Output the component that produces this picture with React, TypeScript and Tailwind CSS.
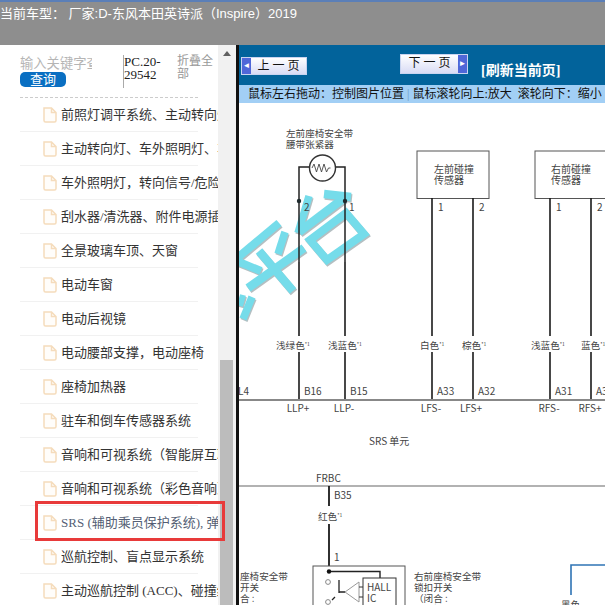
const CN = '"Liberation Serif","Noto Sans CJK SC",serif';
const SANS = '"Liberation Sans","Noto Sans CJK SC",sans-serif';

const items = [
  "前照灯调平系统、主动转向灯系统",
  "主动转向灯、车外照明灯、车内照明灯",
  "车外照明灯，转向信号/危险警告灯",
  "刮水器/清洗器、附件电源插座系统",
  "全景玻璃车顶、天窗",
  "电动车窗",
  "电动后视镜",
  "电动腰部支撑，电动座椅",
  "座椅加热器",
  "驻车和倒车传感器系统",
  "音响和可视系统（智能屏互联）",
  "音响和可视系统（彩色音响）",
  "SRS (辅助乘员保护系统), 弹出式发动机罩",
  "巡航控制、盲点显示系统",
  "主动巡航控制 (ACC)、碰撞缓解系统",
];

function DocIcon() {
  return (
    <svg width="14" height="16" viewBox="0 0 14 16" className="shrink-0">
      <path d="M1 1 H8.5 L13 5.5 V13.5 a1.5 1.5 0 0 1 -1.5 1.5 H2.5 a1.5 1.5 0 0 1 -1.5 -1.5 Z M8.5 1 V5.5 H13" fill="#fffdfa" stroke="#f5dcbc" strokeWidth="1.5" />
    </svg>
  );
}

function Wire({ x, y1, y2, w = 1.6 }: { x: number; y1: number; y2: number; w?: number }) {
  return <line x1={x} x2={x} y1={y1} y2={y2} stroke="#1a1a1a" strokeWidth={w} />;
}

function Label({ x, y, t, size = 9.5, anchor = "start" }: { x: number; y: number; t: string; size?: number; anchor?: "start" | "middle" }) {
  return <text x={x} y={y} fontSize={size} fill="#444" textAnchor={anchor} fontFamily='"Noto Sans CJK SC","Liberation Sans",sans-serif'>{t}</text>;
}

const ox = 239, oy = 103;
const X = (v: number) => v - ox;
const Y = (v: number) => v - oy;

function WatermarkShapes() {
  const strokes: [number, number, number, number, number][] = [
    // 平
    [236, 259, 279, 223, 8],
    [248, 288, 304, 248, 8.5],
    [259, 251, 293, 291, 8.5],
    [239, 262, 261, 271, 8],
    [285, 232, 278, 254, 7.5],
    // 台
    [309, 196, 298, 233, 7.5],
    [299, 232, 344, 198, 8.5],
    [324, 194, 351, 197, 8.5],
    // lower-left remainder
    [252, 297, 243, 319, 7.5],
    [243, 295, 240, 306, 6],
  ];
  return (
    <>
      {strokes.map(([a, b, c, d, w], i) => (
        <line key={i} x1={X(a)} y1={Y(b)} x2={X(c)} y2={Y(d)} strokeWidth={w} />
      ))}
      <path d={`M${X(310)} ${Y(240)} L${X(346)} ${Y(213)} L${X(364)} ${Y(234)} L${X(327)} ${Y(260)} Z`} fill="none" strokeWidth={8} />
    </>
  );
}

function Diagram() {
  // [wire x, colour, colour text x, pin, signal, signal centre x]
  const cols: [number, string, number, string, string, number][] = [
    [299, "浅绿色", 276, "B16", "LLP+", 298],
    [345, "浅蓝色", 328, "B15", "LLP-", 344],
    [432, "白色", 420, "A33", "LFS-", 431],
    [473, "棕色", 462, "A32", "LFS+", 471],
    [550, "浅蓝色", 531, "A31", "RFS-", 549],
    [591, "蓝色", 581, "A30", "RFS+", 590],
  ];
  return (
    <svg width="366" height="502" viewBox="0 0 366 502" className="block">
      {/* watermark */}
      <g stroke="#b4bfc2" transform="translate(1 1.5)">
        <WatermarkShapes />
      </g>
      <g stroke="#75dcea">
        <WatermarkShapes />
      </g>

      <Label x={X(286)} y={Y(137)} t="左前座椅安全带" size={9.6} />
      <Label x={X(286)} y={Y(148)} t="腰带张紧器" size={9.6} />

      {/* resistor */}
      <path d={`M${X(299)} ${Y(262)} V${Y(167)} H${X(345)} V${Y(262)}`} fill="none" stroke="#222" strokeWidth="1.5" />
      <circle cx={X(322.5)} cy={Y(168)} r="13" fill="#fff" stroke="#333" strokeWidth="1.4" />
      <path d={`M${X(312)} ${Y(168)} l2 -4 l2.5 8 l2.5 -8 l2.5 8 l2.5 -8 l2.5 8 l2 -4 h2`} fill="none" stroke="#444" strokeWidth="0.9" />
      <circle cx={X(299)} cy={Y(201)} r="2.2" fill="#1f2b2e" />
      <circle cx={X(345)} cy={Y(201)} r="2.2" fill="#1f2b2e" />
      <Label x={X(304)} y={Y(211)} t="2" size={10} />
      <Label x={X(349)} y={Y(211)} t="1" size={10} />

      {/* sensors */}
      <rect x={X(417)} y={Y(151)} width="72" height="47.5" fill="#fff" stroke="#555" strokeWidth="1" />
      <Label x={X(434)} y={Y(173)} t="左前碰撞" size={10} />
      <Label x={X(434)} y={Y(184)} t="传感器" size={10} />
      <rect x={X(535)} y={Y(151)} width="80" height="47.5" fill="#fff" stroke="#555" strokeWidth="1" />
      <Label x={X(551)} y={Y(173)} t="右前碰撞" size={10} />
      <Label x={X(551)} y={Y(184)} t="传感器" size={10} />
      <Label x={X(438)} y={Y(211)} t="1" size={10} />
      <Label x={X(479)} y={Y(211)} t="2" size={10} />
      <Label x={X(556)} y={Y(211)} t="1" size={10} />
      <Label x={X(597)} y={Y(211)} t="2" size={10} />

      {cols.map(([x, c, cx, pin, sig, sx]) => (
        <g key={pin}>
          {x > 400 && <Wire x={X(x)} y1={Y(198)} y2={Y(336)} />}
          {x < 400 && <Wire x={X(x)} y1={Y(262)} y2={Y(336)} />}
          <Wire x={X(x)} y1={Y(352)} y2={Y(400)} />
          <Label x={X(x + 5)} y={Y(395)} t={pin} size={10} />
          <Label x={X(sx)} y={Y(412)} t={sig} size={10} anchor="middle" />
          <text x={X(cx)} y={Y(349)} fontSize={9.6} fill="#444" fontFamily='"Noto Sans CJK SC",sans-serif'>{c}<tspan fontSize={5} dy={-3}>*1</tspan></text>
        </g>
      ))}
      <Label x={X(238)} y={Y(395)} t="L4" size={10} />
      <line x1="0" x2="366" y1={Y(400)} y2={Y(400)} stroke="#888" strokeWidth="1.8" />

      <Label x={X(369)} y={Y(445)} t="SRS 单元" size={10} />
      <Label x={X(316)} y={Y(482)} t="FRBC" size={10} />
      <line x1="0" x2="366" y1={Y(486)} y2={Y(486)} stroke="#666" strokeWidth="1.2" />
      <Wire x={X(329)} y1={Y(486)} y2={Y(506)} w={1.8} />
      <Wire x={X(329)} y1={Y(524)} y2={Y(571)} w={1.8} />
      <Label x={X(334)} y={Y(499)} t="B35" size={10} />
      <text x={X(318)} y={Y(520)} fontSize={9.6} fill="#444" fontFamily='"Noto Sans CJK SC",sans-serif'>红色<tspan fontSize={5} dy={-3}>*1</tspan></text>
      <Label x={X(334)} y={Y(561)} t="1" size={10} />

      {/* buckle switch */}
      <rect x={X(313)} y={Y(566)} width="92" height="50" fill="#fff" stroke="#555" strokeWidth="1" />
      <path d={`M${X(329)} ${Y(571.5)} H${X(380)} V${Y(578)}`} fill="none" stroke="#222" strokeWidth="1.4" />
      <circle cx={X(329)} cy={Y(571.5)} r="2.2" fill="#111" />
      <circle cx={X(328)} cy={Y(582)} r="2.4" fill="#fff" stroke="#888" />
      <circle cx={X(328)} cy={Y(602)} r="2.4" fill="#fff" stroke="#888" />
      <path d={`M${X(332)} ${Y(600)} L${X(335)} ${Y(597)} M${X(339)} ${Y(580)} V${Y(593)} M${X(339)} ${Y(592)} H${X(345)}`} fill="none" stroke="#222" strokeWidth="1.3" />
      <path d={`M${X(345)} ${Y(592)} L${X(359)} ${Y(582)} V${Y(602)} Z`} fill="none" stroke="#999" strokeWidth="1" />
      <path d={`M${X(359)} ${Y(587)} H${X(363)} M${X(359)} ${Y(597)} H${X(363)}`} fill="none" stroke="#333" strokeWidth="1" />
      <rect x={X(363)} y={Y(578)} width="33" height="28" fill="#fff" stroke="#333" strokeWidth="1" />
      <Label x={X(367)} y={Y(591)} t="HALL" size={10} />
      <Label x={X(367)} y={Y(602)} t="IC" size={10} />

      <Label x={X(240)} y={Y(580)} t="座椅安全带" size={9.6} />
      <Label x={X(240)} y={Y(591)} t="开关" size={9.6} />
      <Label x={X(240)} y={Y(602)} t="合 :" size={9.6} />
      <Label x={X(414)} y={Y(580)} t="右前座椅安全带" size={9.6} />
      <Label x={X(414)} y={Y(591)} t="锁扣开关" size={9.6} />
      <Label x={X(414)} y={Y(602)} t="（闭合 :" size={9.6} />
      <Label x={X(414)} y={Y(613)} t="未扣好 :" size={9.6} />

      <path d={`M${X(571)} ${Y(595)} V${Y(565)} H605`} fill="none" stroke="#2f74b5" strokeWidth="1.6" />
      <Label x={X(561)} y={Y(608)} t="黑色" size={9.6} />
    </svg>
  );
}

function NavBtn({ label, dir, className }: { label: string; dir: "l" | "r"; className: string }) {
  const arrow = (
    <span className="flex w-[9px] items-center justify-center self-stretch bg-[#4f67d8] text-[8px] leading-none text-white">{dir === "l" ? "◄" : "►"}</span>
  );
  return (
    <div className={`flex border border-[#c9d4f0] bg-gradient-to-b from-[#ffffff] to-[#d9dcf5] ${className}`}>
      {dir === "l" && arrow}
      <span className="flex-1 pl-[3px] text-center text-[12px] leading-[16px] tracking-[3px] text-[#111]">{label}</span>
      {dir === "r" && arrow}
    </div>
  );
}

export default function App() {
  return (
    <div className="flex h-[605px] w-[605px] flex-col overflow-hidden bg-white" style={{ fontFamily: CN }}>
      <header className="h-[45px] shrink-0 border-t-2 border-[#5b7fb8] bg-[#8e8e8e] text-[13px] leading-[24px] text-white" style={{ fontFamily: SANS }}>
        当前车型： 厂家:D-东风本田英诗派（Inspire）2019
      </header>

      <div className="flex min-h-0 flex-1">
        <aside className="relative flex w-[236px] shrink-0">
          <div className="w-[218px] shrink-0 overflow-hidden">
            <div className="mx-5 flex h-[53px] border-b border-dashed border-[#cccccc] pt-[10px]">
              <div className="w-[103px] shrink-0">
                <div className="w-[72px] overflow-hidden whitespace-nowrap text-[13.3px] leading-[17px] text-[#b5b5b5]">输入关键字查询</div>
                <div className="h-[15px] w-[46px] rounded-[5px] bg-[#0a6fc2] text-center text-[13px] leading-[15px] text-white">查询</div>
              </div>
              <div className="h-[33px] w-[54px] shrink-0 border-l border-[#aaaaaa] text-[13px] leading-[13px] text-[#222]">PC.20-<br />29542</div>
              <div className="w-[38px] shrink-0 text-[12px] leading-[13px] text-[#999]">折叠全部</div>
            </div>
            <ul>
              {items.map((t, i) => (
                <li key={t} className="relative flex h-[34px] items-center pl-[43px]">
                  <div className="flex min-w-0 flex-1 items-center gap-1">
                    <DocIcon />
                    <span className={`overflow-hidden whitespace-nowrap text-[13px] ${i === 12 ? "text-[#555f75]" : "text-[#333]"}`}>{t}</span>
                  </div>
                  <span className="absolute bottom-0 left-5 w-[178px] border-b border-[#f1f1f1]" />
                </li>
              ))}
            </ul>
          </div>
          <div className="flex w-[18px] shrink-0 flex-col bg-[#f1f1f1]">
            <div className="flex h-[17px] items-start justify-center pt-[6px]">
              <span className="h-0 w-0 border-x-[4px] border-b-[5px] border-x-transparent border-b-[#606060]" />
            </div>
            <div className="ml-[2px] mr-[3px] mt-[298px] flex-1 bg-[#bcbcbc]" />
          </div>
          {/* red annotation */}
          <div className="pointer-events-none absolute left-[35px] top-[456px] h-[40px] w-[190px] border-[3px] border-[#e83a3a]" />
        </aside>

        <main className="flex min-w-0 flex-1 flex-col border-l-[3px] border-[#111]">
          <div className="flex h-[40px] shrink-0 bg-[#02639b]">
            <NavBtn label="上一页" dir="l" className="ml-[2px] mt-[12px] h-[18px] w-[66px]" />
            <NavBtn label="下一页" dir="r" className="ml-[93px] mt-[9px] h-[20px] w-[68px]" />
            <span className="ml-[13px] mt-[17px] text-[14px] font-bold leading-[18px] text-white">[刷新当前页]</span>
          </div>
          <div className="h-[18px] shrink-0 overflow-hidden whitespace-nowrap bg-[#a2cff5] pl-[9px] text-[12px] leading-[18px] text-[#111]">
            鼠标左右拖动：控制图片位置 <span className="text-[#6f9cc4]">|</span> 鼠标滚轮向上:放大&nbsp;&nbsp;滚轮向下：缩小
          </div>
          <div className="min-h-0 flex-1 overflow-hidden bg-white">
            <Diagram />
          </div>
        </main>
      </div>
    </div>
  );
}
